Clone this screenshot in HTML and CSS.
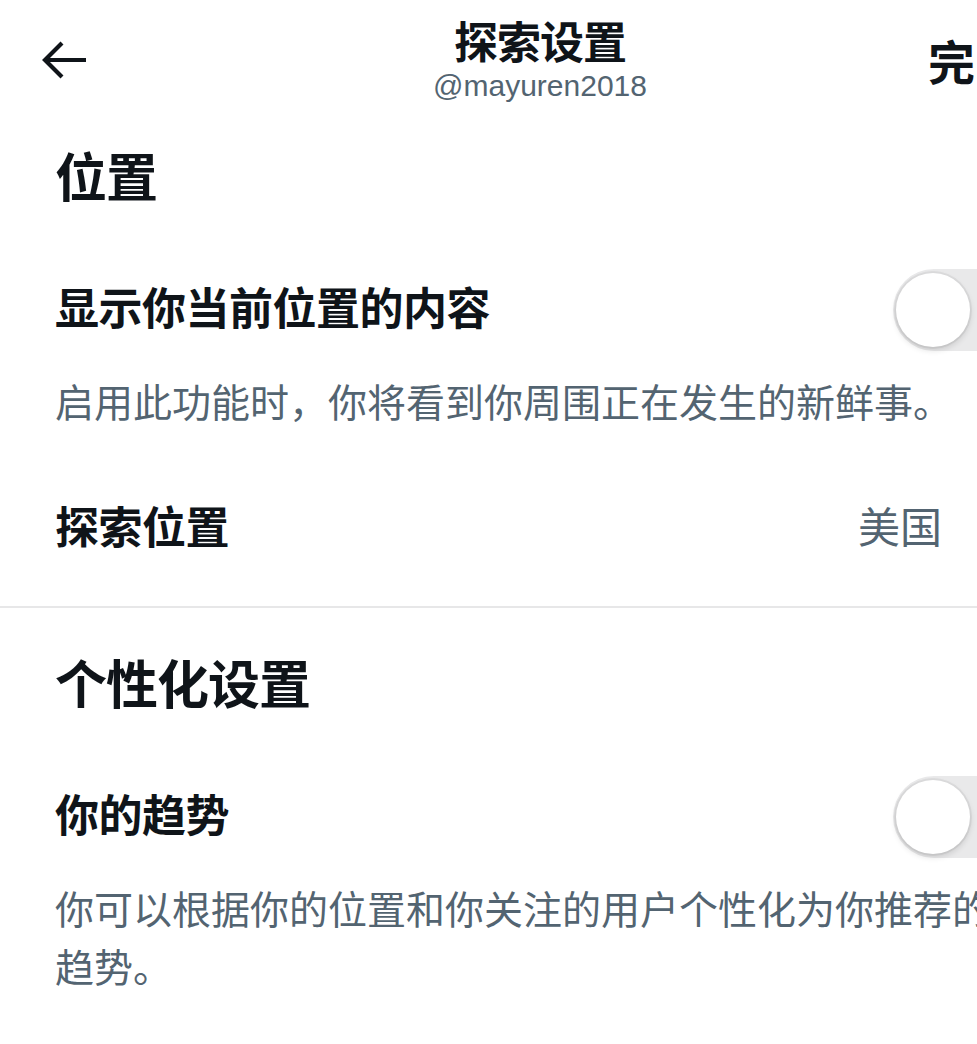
FILE: index.html
```html
<!DOCTYPE html>
<html lang="zh-CN">
<head>
<meta charset="utf-8">
<title>探索设置</title>
<link rel="stylesheet" href="styles.css">
</head>
<body>
<div class="screen">
  <header class="topbar">
    <button class="back" aria-label="返回">
      <svg width="46" height="40" viewBox="0 0 46 40" fill="none" stroke="#0f1419" stroke-width="4.2" stroke-linecap="butt" stroke-linejoin="miter">
        <path d="M45 20H5"/>
        <path d="M21 3L4 20l17 17"/>
      </svg>
    </button>
    <div class="title-block">
      <div class="title">探索设置</div>
      <div class="handle">@mayuren2018</div>
    </div>
    <div class="done">完成</div>
  </header>

  <section class="section">
    <h2 class="section-title">位置</h2>
    <div class="row">
      <span class="row-label">显示你当前位置的内容</span>
      <span class="switch"><span class="knob"></span></span>
    </div>
    <p class="desc">启用此功能时，你将看到你周围正在发生的新鲜事。</p>
    <div class="row row-gap">
      <span class="row-label">探索位置</span>
      <span class="row-value">美国</span>
    </div>
  </section>

  <hr class="divider">

  <section class="section">
    <h2 class="section-title section-title-2">个性化设置</h2>
    <div class="row">
      <span class="row-label">你的趋势</span>
      <span class="switch"><span class="knob"></span></span>
    </div>
    <p class="desc">你可以根据你的位置和你关注的用户个性化为你推荐的趋势。</p>
  </section>
</div>
</body>
</html>
```

FILE: styles.css
```css
html, body {
  margin: 0;
  padding: 0;
  background: #ffffff;
  overflow: hidden;
}

body {
  width: 977px;
  height: 1044px;
  font-family: "Noto Sans CJK SC", "Liberation Sans", sans-serif;
  color: #0f1419;
}

.screen {
  width: 1080px;
}

.topbar {
  display: grid;
  grid-template-columns: 1fr auto 1fr;
  align-items: center;
  height: 104px;
  padding-top: 15px;
  box-sizing: border-box;
}

.back {
  justify-self: start;
  margin-left: 41px;
  padding: 0;
  border: 0;
  background: none;
  display: flex;
}

.title-block {
  display: flex;
  flex-direction: column;
  align-items: center;
  align-self: start;
}

.title {
  font-size: 44px;
  line-height: 50px;
  font-weight: 700;
  letter-spacing: -1px;
}

.handle {
  font-family: "Liberation Sans", "Noto Sans", sans-serif;
  font-size: 30px;
  line-height: 36px;
  margin-top: 3px;
  color: #536471;
}

.done {
  justify-self: end;
  margin-right: 42px;
  font-size: 47px;
  font-weight: 700;
  line-height: 50px;
  letter-spacing: 8px;
}

.section {
  padding: 0 55px;
}

.section-title {
  margin: 39px 0 0;
  font-size: 52px;
  line-height: 64px;
  font-weight: 700;
  letter-spacing: -1px;
}

.section-title-2 {
  margin-top: 42px;
}

.row {
  display: flex;
  align-items: center;
  justify-content: space-between;
  height: 82px;
  margin-top: 62px;
}

.row-gap {
  margin-top: 59px;
}

.row-label {
  font-size: 44px;
  line-height: 50px;
  font-weight: 700;
  letter-spacing: -0.5px;
  padding-bottom: 8px;
}

.row-value {
  font-size: 42px;
  line-height: 50px;
  color: #536471;
  margin-right: 83px;
  padding-bottom: 8px;
}

.switch {
  position: relative;
  width: 132px;
  height: 82px;
  border-radius: 41px;
  background: #e9e9ea;
  flex: none;
}

.knob {
  position: absolute;
  left: 3px;
  top: 4px;
  width: 74px;
  height: 74px;
  border-radius: 50%;
  background: #ffffff;
  box-shadow: 0 3px 6px rgba(0, 0, 0, 0.14), 0 0 0 2px rgba(0, 0, 0, 0.05);
}

.desc {
  margin: 20px 0 0;
  max-width: 950px;
  font-size: 39px;
  line-height: 58px;
  color: #536471;
}

.divider {
  margin: 36px 0 0;
  border: 0;
  height: 2px;
  background: #e7e7e8;
}
```
